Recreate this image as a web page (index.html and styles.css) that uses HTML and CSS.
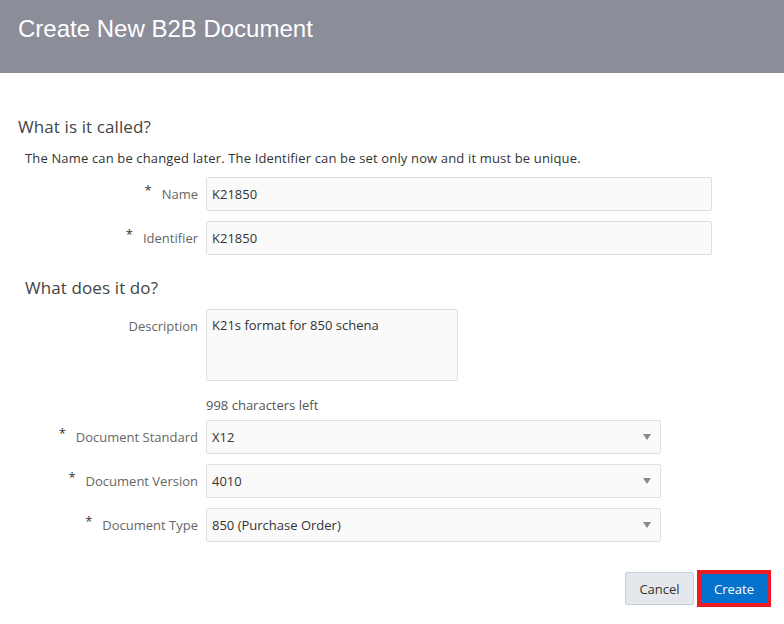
FILE: index.html
```html
<!DOCTYPE html>
<html>
<head>
<meta charset="utf-8">
<link rel="stylesheet" href="styles.css">
</head>
<body>
<header class="titlebar"><h1 class="title">Create New B2B Document</h1></header>
<main class="content">
  <h2 class="section-title first">What is it called?</h2>
  <p class="hint">The Name can be changed later. The Identifier can be set only now and it must be unique.</p>
  <div class="row">
    <label class="label"><span class="req">*</span>Name</label>
    <div class="field wide">K21850</div>
  </div>
  <div class="row">
    <label class="label"><span class="req">*</span>Identifier</label>
    <div class="field wide">K21850</div>
  </div>
  <h2 class="section-title second">What does it do?</h2>
  <div class="row top">
    <label class="label desc-label">Description</label>
    <div class="field area">K21s format for 850 schena</div>
  </div>
  <div class="row counter-row">
    <span class="label"></span>
    <span class="counter">998 characters left</span>
  </div>
  <div class="row sel-row first-sel">
    <label class="label"><span class="req">*</span>Document Standard</label>
    <div class="field select"><span>X12</span><span class="caret"></span></div>
  </div>
  <div class="row sel-row">
    <label class="label"><span class="req">*</span>Document Version</label>
    <div class="field select"><span>4010</span><span class="caret"></span></div>
  </div>
  <div class="row sel-row">
    <label class="label"><span class="req">*</span>Document Type</label>
    <div class="field select"><span>850 (Purchase Order)</span><span class="caret"></span></div>
  </div>
  <div class="actions">
    <button class="btn cancel">Cancel</button>
    <button class="btn create">Create</button>
  </div>
</main>
</body>
</html>
```

FILE: styles.css
```css
* { box-sizing: border-box; }
html, body { margin: 0; padding: 0; background: #fff; }
body {
  font-family: "Open Sans", "Noto Sans", sans-serif;
  font-size: 13px;
  color: #333;
  width: 784px;
  height: 624px;
  overflow: hidden;
}
.titlebar {
  height: 73px;
  background: #8b8d99;
  padding: 14px 0 0 18px;
}
.title {
  margin: 0;
  font-family: "Liberation Sans", Arial, sans-serif;
  font-weight: normal;
  font-size: 24px;
  line-height: 30px;
  color: #fff;
}
.content { display: flex; flex-direction: column; }
.section-title {
  margin: 0;
  font-weight: normal;
  font-size: 17px;
  letter-spacing: 0.1px;
  line-height: 22px;
  color: #444;
}
.section-title.first { margin-top: 43px; padding-left: 18px; }
.section-title.second { margin-top: 22px; padding-left: 25px; }
.hint {
  margin: 11px 0 0 0;
  padding-left: 25px;
  line-height: 18px;
  letter-spacing: 0.15px;
  color: #333;
}
.row {
  display: flex;
  align-items: center;
  gap: 8px;
  margin-top: 10px;
}
.row.top { align-items: flex-start; }
.label {
  width: 198px;
  flex: none;
  text-align: right;
  color: #666;
  font-size: 13px;
}
.desc-label { padding-top: 8px; }
.req {
  color: #333;
  font-size: 13px;
  position: relative;
  top: -4px;
  margin-right: 10px;
}
.field {
  height: 34px;
  background: #fafafa;
  border: 1px solid #dfdfdf;
  border-radius: 2px;
  padding: 0 5px;
  display: flex;
  align-items: center;
  font-size: 13px;
  color: #333;
}
.field.wide { width: 506px; }
.field.area { width: 252px; height: 72px; align-items: flex-start; padding-top: 6px; }
.counter { color: #555; line-height: 18px; margin-top: 5px; }
.row.sel-row { margin-top: 10px; }
.row.sel-row.first-sel { margin-top: 6px; }
.field.select { width: 455px; justify-content: space-between; }
.caret {
  width: 0; height: 0;
  border-left: 4.5px solid transparent;
  border-right: 4.5px solid transparent;
  border-top: 6px solid #8a8a8a;
  margin-right: 4px;
}
.actions {
  display: flex;
  justify-content: flex-end;
  align-items: center;
  gap: 3px;
  margin-top: 28px;
  padding-right: 13px;
}
.btn {
  font-family: "Open Sans", "Noto Sans", sans-serif;
  font-size: 13px;
  cursor: pointer;
  padding: 0;
}
.cancel {
  width: 69px;
  height: 33px;
  background: #e4e8ec;
  border: 1px solid #c4ced7;
  border-radius: 2px;
  color: #333;
}
.create {
  width: 74px;
  height: 37px;
  background: #0572ce;
  border: 4px solid #ed1c24;
  color: #fff;
}
```
